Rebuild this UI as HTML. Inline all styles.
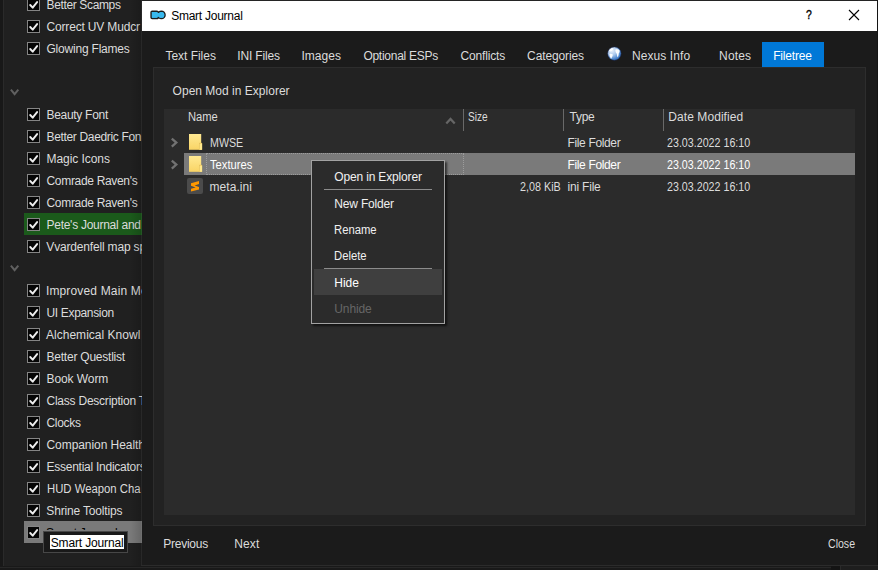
<!DOCTYPE html>
<html><head><meta charset="utf-8"><title>Smart Journal</title>
<style>
html,body{margin:0;padding:0;background:#202020;}
body{width:878px;height:570px;position:relative;overflow:hidden;font-family:"Liberation Sans", sans-serif;font-size:12px;line-height:16px;}
.t{position:absolute;white-space:nowrap;transform-origin:0 0;font-size:12px;line-height:16px;height:16px;}
div,svg{position:absolute;}
#left{left:0;top:0;width:143px;height:570px;background:#202020;overflow:hidden;}
.cb{left:27px;width:11px;height:11px;border:1px solid #858585;background:#050505;}
.cb svg{left:-1px;top:-1px;}
#dlg{left:0;top:0;width:878px;height:570px;}
#menu{left:311px;top:160px;width:132px;height:162px;border:1px solid #a2a2a2;background:#2b2b2b;box-shadow:2px 2px 2px rgba(0,0,0,.6);}
</style></head><body>
<!-- left mod list -->
<div id="left">
<div style="left:0;top:0;width:3px;height:570px;background:#181818"></div>
<div style="left:3px;top:0;width:1px;height:570px;background:#2a2a2a"></div>
<div style="left:24px;top:213px;width:118px;height:22px;background:#1b5a1b"></div>
<div style="left:24px;top:521px;width:118px;height:22px;background:#7a7a7a"></div>
<svg style="left:10px;top:88px" width="10" height="9" viewBox="0 0 10 9"><path d="M.9 1.6 L4.6 6.2 L8.3 1.6" fill="none" stroke="#606060" stroke-width="2"/></svg>
<svg style="left:10px;top:264px" width="10" height="9" viewBox="0 0 10 9"><path d="M.9 1.6 L4.6 6.2 L8.3 1.6" fill="none" stroke="#606060" stroke-width="2"/></svg>
<div class="cb" style="top:-2px"><svg width="13" height="13" viewBox="0 0 13 13"><path d="M3.2 7 L5.7 9.7 L10.1 4.1" fill="none" stroke="#eeeeee" stroke-width="1.9" stroke-linecap="round" stroke-linejoin="round"/></svg></div>
<div class="cb" style="top:20px"><svg width="13" height="13" viewBox="0 0 13 13"><path d="M3.2 7 L5.7 9.7 L10.1 4.1" fill="none" stroke="#eeeeee" stroke-width="1.9" stroke-linecap="round" stroke-linejoin="round"/></svg></div>
<div class="cb" style="top:42px"><svg width="13" height="13" viewBox="0 0 13 13"><path d="M3.2 7 L5.7 9.7 L10.1 4.1" fill="none" stroke="#eeeeee" stroke-width="1.9" stroke-linecap="round" stroke-linejoin="round"/></svg></div>
<div class="cb" style="top:108px"><svg width="13" height="13" viewBox="0 0 13 13"><path d="M3.2 7 L5.7 9.7 L10.1 4.1" fill="none" stroke="#eeeeee" stroke-width="1.9" stroke-linecap="round" stroke-linejoin="round"/></svg></div>
<div class="cb" style="top:130px"><svg width="13" height="13" viewBox="0 0 13 13"><path d="M3.2 7 L5.7 9.7 L10.1 4.1" fill="none" stroke="#eeeeee" stroke-width="1.9" stroke-linecap="round" stroke-linejoin="round"/></svg></div>
<div class="cb" style="top:152px"><svg width="13" height="13" viewBox="0 0 13 13"><path d="M3.2 7 L5.7 9.7 L10.1 4.1" fill="none" stroke="#eeeeee" stroke-width="1.9" stroke-linecap="round" stroke-linejoin="round"/></svg></div>
<div class="cb" style="top:174px"><svg width="13" height="13" viewBox="0 0 13 13"><path d="M3.2 7 L5.7 9.7 L10.1 4.1" fill="none" stroke="#eeeeee" stroke-width="1.9" stroke-linecap="round" stroke-linejoin="round"/></svg></div>
<div class="cb" style="top:196px"><svg width="13" height="13" viewBox="0 0 13 13"><path d="M3.2 7 L5.7 9.7 L10.1 4.1" fill="none" stroke="#eeeeee" stroke-width="1.9" stroke-linecap="round" stroke-linejoin="round"/></svg></div>
<div class="cb" style="top:218px"><svg width="13" height="13" viewBox="0 0 13 13"><path d="M3.2 7 L5.7 9.7 L10.1 4.1" fill="none" stroke="#eeeeee" stroke-width="1.9" stroke-linecap="round" stroke-linejoin="round"/></svg></div>
<div class="cb" style="top:240px"><svg width="13" height="13" viewBox="0 0 13 13"><path d="M3.2 7 L5.7 9.7 L10.1 4.1" fill="none" stroke="#eeeeee" stroke-width="1.9" stroke-linecap="round" stroke-linejoin="round"/></svg></div>
<div class="cb" style="top:284px"><svg width="13" height="13" viewBox="0 0 13 13"><path d="M3.2 7 L5.7 9.7 L10.1 4.1" fill="none" stroke="#eeeeee" stroke-width="1.9" stroke-linecap="round" stroke-linejoin="round"/></svg></div>
<div class="cb" style="top:306px"><svg width="13" height="13" viewBox="0 0 13 13"><path d="M3.2 7 L5.7 9.7 L10.1 4.1" fill="none" stroke="#eeeeee" stroke-width="1.9" stroke-linecap="round" stroke-linejoin="round"/></svg></div>
<div class="cb" style="top:328px"><svg width="13" height="13" viewBox="0 0 13 13"><path d="M3.2 7 L5.7 9.7 L10.1 4.1" fill="none" stroke="#eeeeee" stroke-width="1.9" stroke-linecap="round" stroke-linejoin="round"/></svg></div>
<div class="cb" style="top:350px"><svg width="13" height="13" viewBox="0 0 13 13"><path d="M3.2 7 L5.7 9.7 L10.1 4.1" fill="none" stroke="#eeeeee" stroke-width="1.9" stroke-linecap="round" stroke-linejoin="round"/></svg></div>
<div class="cb" style="top:372px"><svg width="13" height="13" viewBox="0 0 13 13"><path d="M3.2 7 L5.7 9.7 L10.1 4.1" fill="none" stroke="#eeeeee" stroke-width="1.9" stroke-linecap="round" stroke-linejoin="round"/></svg></div>
<div class="cb" style="top:394px"><svg width="13" height="13" viewBox="0 0 13 13"><path d="M3.2 7 L5.7 9.7 L10.1 4.1" fill="none" stroke="#eeeeee" stroke-width="1.9" stroke-linecap="round" stroke-linejoin="round"/></svg></div>
<div class="cb" style="top:416px"><svg width="13" height="13" viewBox="0 0 13 13"><path d="M3.2 7 L5.7 9.7 L10.1 4.1" fill="none" stroke="#eeeeee" stroke-width="1.9" stroke-linecap="round" stroke-linejoin="round"/></svg></div>
<div class="cb" style="top:438px"><svg width="13" height="13" viewBox="0 0 13 13"><path d="M3.2 7 L5.7 9.7 L10.1 4.1" fill="none" stroke="#eeeeee" stroke-width="1.9" stroke-linecap="round" stroke-linejoin="round"/></svg></div>
<div class="cb" style="top:460px"><svg width="13" height="13" viewBox="0 0 13 13"><path d="M3.2 7 L5.7 9.7 L10.1 4.1" fill="none" stroke="#eeeeee" stroke-width="1.9" stroke-linecap="round" stroke-linejoin="round"/></svg></div>
<div class="cb" style="top:482px"><svg width="13" height="13" viewBox="0 0 13 13"><path d="M3.2 7 L5.7 9.7 L10.1 4.1" fill="none" stroke="#eeeeee" stroke-width="1.9" stroke-linecap="round" stroke-linejoin="round"/></svg></div>
<div class="cb" style="top:504px"><svg width="13" height="13" viewBox="0 0 13 13"><path d="M3.2 7 L5.7 9.7 L10.1 4.1" fill="none" stroke="#eeeeee" stroke-width="1.9" stroke-linecap="round" stroke-linejoin="round"/></svg></div>
<div class="cb" style="top:526px"><svg width="13" height="13" viewBox="0 0 13 13"><path d="M3.2 7 L5.7 9.7 L10.1 4.1" fill="none" stroke="#eeeeee" stroke-width="1.9" stroke-linecap="round" stroke-linejoin="round"/></svg></div>
<span class="t" style="left:46.50px;top:-3px;color:#dcdcdc;letter-spacing:-0.358px">Better Scamps</span>
<span class="t" style="left:46.50px;top:19px;color:#dcdcdc;letter-spacing:-0.166px">Correct UV Mudcr</span>
<span class="t" style="left:46.50px;top:41px;color:#dcdcdc;letter-spacing:-0.21px">Glowing Flames</span>
<span class="t" style="left:46.50px;top:107px;color:#dcdcdc;letter-spacing:-0.297px">Beauty Font</span>
<span class="t" style="left:46.50px;top:129px;color:#dcdcdc;letter-spacing:-0.335px">Better Daedric Fon</span>
<span class="t" style="left:46.50px;top:151px;color:#dcdcdc;letter-spacing:-0.063px">Magic Icons</span>
<span class="t" style="left:46.50px;top:173px;color:#dcdcdc;letter-spacing:-0.319px">Comrade Raven&#x27;s</span>
<span class="t" style="left:46.50px;top:195px;color:#dcdcdc;letter-spacing:-0.319px">Comrade Raven&#x27;s</span>
<span class="t" style="left:46.50px;top:217px;color:#dcdcdc;letter-spacing:-0.268px">Pete&#x27;s Journal and</span>
<span class="t" style="left:46.30px;top:239px;color:#dcdcdc;letter-spacing:-0.174px">Vvardenfell map splash</span>
<span class="t" style="left:45.90px;top:283px;color:#dcdcdc;letter-spacing:0.159px">Improved Main Menu</span>
<span class="t" style="left:46.50px;top:305px;color:#dcdcdc;letter-spacing:-0.336px">UI Expansion</span>
<span class="t" style="left:46.00px;top:327px;color:#dcdcdc;letter-spacing:0.021px">Alchemical Knowl</span>
<span class="t" style="left:46.50px;top:349px;color:#dcdcdc;letter-spacing:-0.226px">Better Questlist</span>
<span class="t" style="left:46.50px;top:371px;color:#dcdcdc;letter-spacing:-0.083px">Book Worm</span>
<span class="t" style="left:46.50px;top:393px;color:#dcdcdc;letter-spacing:-0.231px">Class Description Tooltips</span>
<span class="t" style="left:46.50px;top:415px;color:#dcdcdc;letter-spacing:-0.321px">Clocks</span>
<span class="t" style="left:46.50px;top:437px;color:#dcdcdc;letter-spacing:-0.063px">Companion Health Bars</span>
<span class="t" style="left:46.50px;top:459px;color:#dcdcdc;letter-spacing:-0.253px">Essential Indicators</span>
<span class="t" style="left:46.50px;top:481px;color:#dcdcdc;transform:scaleX(0.9429)">HUD Weapon Cha</span>
<span class="t" style="left:46.30px;top:503px;color:#dcdcdc;letter-spacing:-0.165px">Shrine Tooltips</span>
<div style="left:0;top:521px;width:142px;height:9.4px;overflow:hidden"><span class="t" style="left:46.00px;top:4px;color:#000;letter-spacing:-0.252px">Smart Journal</span></div>
<div style="left:0;top:567px;width:142px;height:1px;background:#2a2a2a"></div>
<div style="left:0;top:568px;width:142px;height:2px;background:#191919"></div>
<div style="left:130px;top:0;width:12px;height:570px;background:linear-gradient(to right,rgba(0,0,0,0),rgba(0,0,0,.16))"></div>
</div>
<!-- rename edit box -->
<div style="left:43px;top:531px;width:83px;height:20px;border:1px solid #474747;background:#191919"></div>
<div style="left:50px;top:535px;width:74px;height:14px;background:#ffffff"></div>
<span class="t" style="left:50.70px;top:535px;color:#000;letter-spacing:-0.144px">Smart Journal</span>
<!-- dialog -->
<div id="dlg">
<div style="left:142px;top:0;width:736px;height:570px;background:#1b1b1b"></div>
<div style="left:141px;top:0;width:1px;height:566px;background:rgba(255,255,255,.06)"></div>
<div style="left:142px;top:0;width:736px;height:1px;background:#242424"></div>
<div style="left:142px;top:1px;width:735px;height:30px;background:#ffffff"></div>
<div style="left:877px;top:0;width:1px;height:570px;background:#141414"></div>
<!-- title icon -->
<svg style="left:150px;top:10px" width="17" height="11" viewBox="0 0 17 11"><g fill="#38b9ee" stroke="#1c1c1c" stroke-width="1.5" stroke-linejoin="round"><path d="M2.1 1.2 H6.6 Q8.5 1.2 8.5 3.1 V6.7 Q8.5 8.6 6.6 8.6 H2.1 Q1.1 8.6 1.1 7.6 V2.2 Q1.1 1.2 2.1 1.2 Z"/><circle cx="11.4" cy="4.9" r="3.65"/></g><g fill="#38b9ee"><path d="M2.3 1.95 H6.5 Q7.75 1.95 7.75 3.2 V6.6 Q7.75 7.85 6.5 7.85 H2.3 Q1.85 7.85 1.85 7.4 V2.4 Q1.85 1.95 2.3 1.95 Z"/><rect x="6" y="3" width="4" height="3.8"/><circle cx="11.4" cy="4.9" r="2.9"/></g></svg>
<!-- ? and X -->
<span class="t" style="left:806px;top:7px;color:#000;font-size:13px;transform:scaleX(.8);-webkit-text-stroke:.4px #000">?</span>
<svg style="left:848px;top:9px" width="12" height="12" viewBox="0 0 12 12"><path d="M1 1 L11 11 M11 1 L1 11" stroke="#000" stroke-width="1.1" fill="none"/></svg>
<!-- tab pane -->
<div style="left:153px;top:67px;width:711px;height:457px;background:#222222;border:1px solid #2d2d2d;box-sizing:content-box"></div>
<div style="left:762px;top:42px;width:62px;height:25px;background:#0078d7"></div>
<!-- globe -->
<svg style="left:607px;top:46px" width="15" height="15" viewBox="0 0 15 15">
<defs><radialGradient id="gg" cx="30%" cy="25%" r="85%"><stop offset="0" stop-color="#eef4fc"/><stop offset=".45" stop-color="#a9c7ec"/><stop offset=".8" stop-color="#4a84cc"/><stop offset="1" stop-color="#2b5fa8"/></radialGradient></defs>
<circle cx="7.4" cy="7.6" r="6.7" fill="url(#gg)" stroke="#1b2c5c" stroke-width=".5"/>
<path d="M2 4.6 C2.5 3 4.5 2 6.2 2.2 C6.4 3.2 5.6 4.2 4.8 4.8 C4 5.6 2.8 5.8 2 4.6Z" fill="#fff" opacity=".85"/>
<path d="M2.4 8 C3.4 7.4 5 7.6 5.8 8.4 C5.8 9.6 5.2 10.6 4.8 11.6 C4.6 12.4 4.2 12.8 3.8 12.6 C3.4 11.4 2.4 9.6 2.4 8Z" fill="#fff" opacity=".95"/>
<path d="M8.4 3.6 C9.6 3 11.6 3.2 12.6 4.4 C12.8 5.6 12.4 6.6 11.8 7.2 C11.6 8.8 11.4 10.4 10.8 11.4 C10 10.6 10 9 9.8 7.8 C8.8 7 8 5 8.4 3.6Z" fill="#fff" opacity=".95"/>
</svg>
<!-- tree -->
<div style="left:164px;top:109px;width:691px;height:406px;background:#2b2b2b"></div>
<div style="left:463px;top:109px;width:1px;height:22px;background:#696969"></div>
<div style="left:563px;top:109px;width:1px;height:22px;background:#696969"></div>
<div style="left:663px;top:109px;width:1px;height:22px;background:#696969"></div>
<svg style="left:445px;top:116px" width="11" height="9" viewBox="0 0 11 9"><path d="M1.3 7.6 L5.5 3 L9.7 7.6" fill="none" stroke="#666666" stroke-width="2.2"/></svg>
<!-- selected row -->
<div style="left:184px;top:153px;width:671px;height:22px;background:#7a7a7a"></div>
<div style="left:206px;top:153px;width:258px;height:22px;border:1px dotted #9c9c9c;box-sizing:border-box"></div>
<!-- expand arrows -->
<svg style="left:170px;top:137px" width="9" height="11" viewBox="0 0 9 11"><path d="M1.8 1.6 L6.3 5.6 L1.8 9.6" fill="none" stroke="#727272" stroke-width="2.3"/></svg>
<svg style="left:170px;top:159px" width="9" height="11" viewBox="0 0 9 11"><path d="M1.8 1.6 L6.3 5.6 L1.8 9.6" fill="none" stroke="#727272" stroke-width="2.3"/></svg>
<!-- folder icons -->
<svg style="left:189px;top:134px" width="14" height="16" viewBox="0 0 14 16"><defs><linearGradient id="fg" x1="0" y1="0" x2="0" y2="1"><stop offset="0" stop-color="#ffe992"/><stop offset="1" stop-color="#f9d465"/></linearGradient></defs><rect x="0" y="0" width="12.2" height="15.8" fill="url(#fg)"/><rect x="10" y="8.9" width="3.1" height="6.9" fill="#e3bb52"/><rect x="10.6" y="9.5" width="2.5" height="6.3" fill="#ffe88c"/></svg>
<svg style="left:189px;top:156px" width="14" height="16" viewBox="0 0 14 16"><rect x="0" y="0" width="12.2" height="15.8" fill="url(#fg)"/><rect x="10" y="8.9" width="3.1" height="6.9" fill="#e3bb52"/><rect x="10.6" y="9.5" width="2.5" height="6.3" fill="#ffe88c"/></svg>
<!-- sublime icon -->
<svg style="left:187px;top:178px" width="16" height="16" viewBox="0 0 16 16"><rect x="0" y="0" width="16" height="16" rx="2" fill="#4b4b4b"/><path d="M4 5.2 L12 3 V6 L7.6 7.4 L12 9 V11.6 L4 13.6 V10.8 L8.6 9.4 L4 7.8 Z" fill="#ff9800"/></svg>
<span class="t" style="left:171.20px;top:8px;color:#000;letter-spacing:-0.252px">Smart Journal</span>
<span class="t" style="left:165.50px;top:48px;color:#dcdcdc;letter-spacing:-0.031px">Text Files</span>
<span class="t" style="left:237.20px;top:48px;color:#dcdcdc;letter-spacing:-0.138px">INI Files</span>
<span class="t" style="left:301.40px;top:48px;color:#dcdcdc;letter-spacing:0.05px">Images</span>
<span class="t" style="left:363.40px;top:48px;color:#dcdcdc;letter-spacing:-0.262px">Optional ESPs</span>
<span class="t" style="left:460.50px;top:48px;color:#dcdcdc;letter-spacing:-0.164px">Conflicts</span>
<span class="t" style="left:527.10px;top:48px;color:#dcdcdc;letter-spacing:-0.126px">Categories</span>
<span class="t" style="left:632.00px;top:48px;color:#dcdcdc;letter-spacing:0.079px">Nexus Info</span>
<span class="t" style="left:719.10px;top:48px;color:#dcdcdc;letter-spacing:0.138px">Notes</span>
<span class="t" style="left:773.20px;top:48px;color:#ffffff;letter-spacing:-0.177px">Filetree</span>
<span class="t" style="left:172.60px;top:83px;color:#dcdcdc;letter-spacing:0.014px">Open Mod in Explorer</span>
<span class="t" style="left:188.40px;top:109px;color:#dcdcdc;transform:scaleX(0.9309)">Name</span>
<span class="t" style="left:468.20px;top:109px;color:#dcdcdc;transform:scaleX(0.845)">Size</span>
<span class="t" style="left:569.50px;top:109px;color:#dcdcdc;letter-spacing:-0.247px">Type</span>
<span class="t" style="left:668.30px;top:109px;color:#dcdcdc;letter-spacing:0.07px">Date Modified</span>
<span class="t" style="left:209.50px;top:135px;color:#dcdcdc;transform:scaleX(0.8895)">MWSE</span>
<span class="t" style="left:209.50px;top:157px;color:#ffffff;transform:scaleX(0.9327)">Textures</span>
<span class="t" style="left:209.50px;top:179px;color:#dcdcdc;letter-spacing:0.05px">meta.ini</span>
<span class="t" style="left:567.50px;top:135px;color:#dcdcdc;letter-spacing:-0.349px">File Folder</span>
<span class="t" style="left:567.50px;top:157px;color:#ffffff;letter-spacing:-0.349px">File Folder</span>
<span class="t" style="left:567.50px;top:179px;color:#dcdcdc;letter-spacing:-0.2px">ini File</span>
<span class="t" style="left:519.80px;top:179px;color:#dcdcdc;transform:scaleX(0.8973)">2,08 KiB</span>
<span class="t" style="left:667.00px;top:135px;color:#dcdcdc;transform:scaleX(0.8907)">23.03.2022 16:10</span>
<span class="t" style="left:667.00px;top:157px;color:#ffffff;transform:scaleX(0.8907)">23.03.2022 16:10</span>
<span class="t" style="left:667.00px;top:179px;color:#dcdcdc;transform:scaleX(0.8907)">23.03.2022 16:10</span>
<span class="t" style="left:163.30px;top:536px;color:#dcdcdc;letter-spacing:-0.255px">Previous</span>
<span class="t" style="left:234.20px;top:536px;color:#dcdcdc;letter-spacing:0.153px">Next</span>
<span class="t" style="left:828.20px;top:536px;color:#dcdcdc;transform:scaleX(0.8805)">Close</span>
<!-- bottom edge of dialog -->
<div style="left:141px;top:565px;width:737px;height:1px;background:#2b2b2b"></div>
<div style="left:0px;top:566px;width:878px;height:4px;background:#191919"></div>
<div style="left:0px;top:567px;width:831px;height:1px;background:#272727"></div>
<div style="left:831px;top:566px;width:9px;height:4px;background:#141414"></div>
<div style="left:840px;top:566px;width:1px;height:4px;background:#2a2a2a"></div>
<div style="left:841px;top:566px;width:37px;height:4px;background:#1e1e1e"></div>
</div>
<!-- context menu -->
<div id="menu">
<div style="left:12px;top:28px;width:108px;height:1px;background:#8c8c8c"></div>
<div style="left:12px;top:107px;width:108px;height:1px;background:#8c8c8c"></div>
<div style="left:2px;top:108px;width:128px;height:26px;background:#3f3f3f"></div>
<span class="t" style="left:22.30px;top:8px;color:#f0f0f0;letter-spacing:-0.163px">Open in Explorer</span>
<span class="t" style="left:22.30px;top:35px;color:#f0f0f0;letter-spacing:-0.184px">New Folder</span>
<span class="t" style="left:22.30px;top:61px;color:#f0f0f0;transform:scaleX(0.9391)">Rename</span>
<span class="t" style="left:22.30px;top:87px;color:#f0f0f0;transform:scaleX(0.9396)">Delete</span>
<span class="t" style="left:22.30px;top:114px;color:#ffffff;letter-spacing:-0.002px">Hide</span>
<span class="t" style="left:22.30px;top:140px;color:#666666;letter-spacing:-0.111px">Unhide</span>
</div>
</body></html>
